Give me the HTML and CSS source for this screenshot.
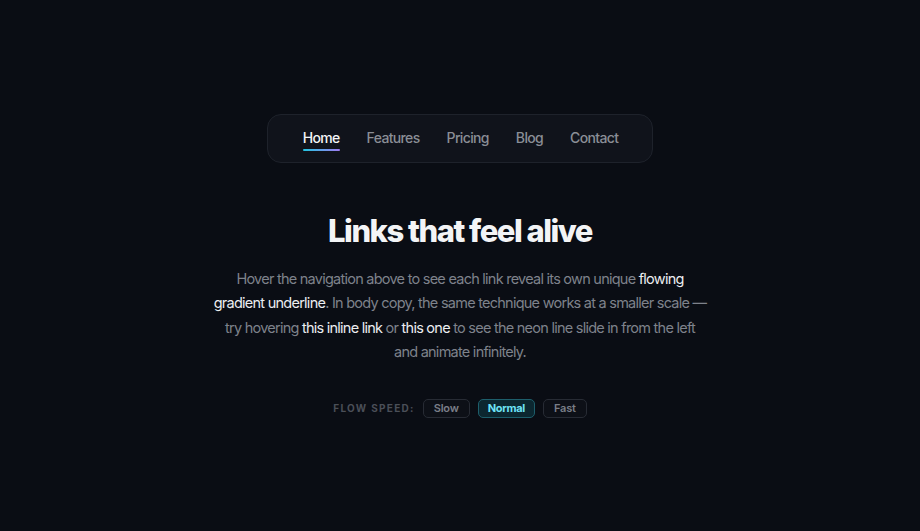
FILE: index.html
```html
<!DOCTYPE html>
<html lang="en">
<head>
<meta charset="utf-8">
<title>Links that feel alive</title>
<link rel="stylesheet" href="styles.css">
</head>
<body>
<main class="page">
  <nav class="nav">
    <a class="nav-link active" href="#">Home</a>
    <a class="nav-link" href="#">Features</a>
    <a class="nav-link" href="#">Pricing</a>
    <a class="nav-link" href="#">Blog</a>
    <a class="nav-link" href="#">Contact</a>
  </nav>
  <h1 class="title">Links that feel alive</h1>
  <p class="lead">Hover the navigation above to see each link reveal its own unique <a class="inline" href="#">flowing gradient underline</a>. In body copy, the same technique works at a smaller scale — try hovering <a class="inline" href="#">this inline link</a> or <a class="inline" href="#">this one</a> to see the neon line slide in from the left and animate infinitely.</p>
  <div class="speed">
    <span class="speed-label">Flow speed:</span>
    <button class="speed-btn">Slow</button>
    <button class="speed-btn on">Normal</button>
    <button class="speed-btn">Fast</button>
  </div>
</main>
</body>
</html>
```
FILE: styles.css
```css
* { box-sizing: border-box; }
html, body { margin: 0; height: 100%; }
body {
  background: #0a0d14;
  font-family: Inter, "Noto Sans", sans-serif;
  color: #e8eaee;
}
.page {
  min-height: 100%;
  display: flex;
  flex-direction: column;
  align-items: center;
  justify-content: center;
}
.nav {
  display: flex;
  gap: 27px;
  padding: 13.5px 34px 13.5px 35px;
  background: #10131b;
  border: 1px solid #1e222b;
  border-radius: 14px;
}
.nav-link {
  position: relative;
  font-size: 14px;
  line-height: 20px;
  font-weight: 500;
  letter-spacing: -0.65px;
  color: #8a8e96;
  text-decoration: none;
}
.nav-link.active { color: #f4f5f7; }
.nav-link.active::after {
  content: "";
  position: absolute;
  left: 0;
  right: 0;
  bottom: -3px;
  height: 2px;
  border-radius: 1px;
  background: linear-gradient(90deg, #22c5e0, #a07cf2);
}
.title {
  margin: 48px 0 0;
  font-size: 31px;
  line-height: 40px;
  font-weight: 800;
  letter-spacing: -1.5px;
  color: #f3f4f6;
}
.lead {
  margin: 16px 0 0;
  max-width: 495px;
  text-align: center;
  font-size: 14.5px;
  line-height: 24.5px;
  letter-spacing: -0.75px;
  color: #7e828b;
}
.inline {
  color: #eceef1;
  text-decoration: none;
}
.speed {
  margin-top: 34px;
  display: flex;
  align-items: center;
  gap: 8px;
}
.speed-label {
  font-size: 10px;
  font-weight: 700;
  letter-spacing: 1.3px;
  text-transform: uppercase;
  color: #4a4f58;
}
.speed-btn {
  font-family: inherit;
  font-size: 11px;
  font-weight: 600;
  line-height: 13px;
  letter-spacing: -0.2px;
  padding: 2px 10px;
  height: 19px;
  border-radius: 5px;
  border: 1px solid #272b34;
  background: #0d1017;
  color: #7a7e87;
}
.speed-btn.on {
  padding: 2px 9px;
  letter-spacing: -0.3px;
  background: #0c2730;
  border-color: #1d5e6b;
  color: #6ee3f5;
  font-weight: 700;
}
```
